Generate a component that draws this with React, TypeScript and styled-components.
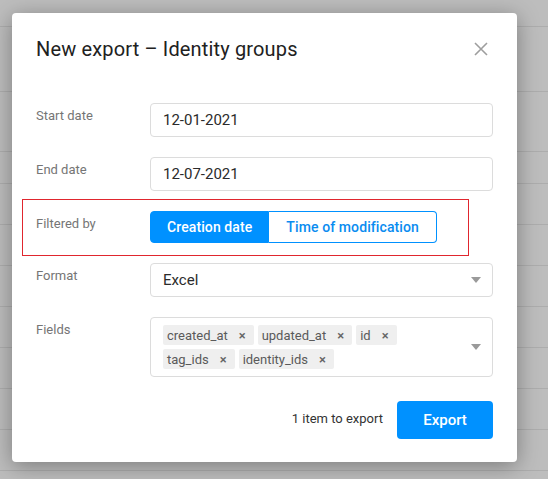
import React from 'react';
import styled, { createGlobalStyle } from 'styled-components';

const GlobalStyle = createGlobalStyle`
  html, body {
    margin: 0;
    padding: 0;
    background: #bdbdbd;
    font-family: Roboto, "Liberation Sans", Arial, sans-serif;
  }
  * { box-sizing: border-box; }
`;

const Page = styled.div`
  position: relative;
  width: 548px;
  height: 479px;
  overflow: hidden;
  background: #bdbdbd;
`;

const BackRow = styled.div<{ h: number }>`
  height: ${p => p.h}px;
  border-bottom: 1px solid #adadad;
`;

const Modal = styled.div`
  position: absolute;
  top: 13px;
  left: 12px;
  width: 505px;
  height: 449px;
  background: #fff;
  border-radius: 4px;
  box-shadow: 0 4px 22px rgba(0, 0, 0, 0.35);
  padding: 24px;
  display: flex;
  flex-direction: column;
`;

const Header = styled.div`
  display: flex;
  align-items: center;
  justify-content: space-between;
  height: 24px;
`;

const Title = styled.h1`
  margin: 0;
  font-size: 20px;
  font-weight: 400;
  line-height: 24px;
  letter-spacing: 0.15px;
  color: #212121;
`;

const CloseButton = styled.button`
  border: none;
  background: none;
  padding: 0;
  margin-right: 5px;
  width: 14px;
  height: 14px;
  display: flex;
  cursor: pointer;
`;

const Form = styled.div`
  margin-top: 42px;
  display: flex;
  flex-direction: column;
  gap: 20px;
`;

const Row = styled.div<{ highlight?: boolean }>`
  position: relative;
  display: flex;
  align-items: flex-start;

  ${p => p.highlight && `
    &::after {
      content: '';
      position: absolute;
      top: -12px;
      bottom: -13px;
      left: -14px;
      right: 24px;
      border: 1px solid #e0262e;
      pointer-events: none;
    }
  `}
`;

const Label = styled.div`
  width: 114px;
  flex-shrink: 0;
  padding-top: 3px;
  font-size: 13px;
  line-height: 20px;
  color: #757575;
`;

const Field = styled.div`
  flex: 1;
  height: 34px;
  border: 1px solid #dcdcdc;
  border-radius: 4px;
  display: flex;
  align-items: center;
  justify-content: space-between;
  padding: 0 11px 0 12px;
  font-size: 15px;
  color: #2b2b2b;
`;

const Arrow = styled.span`
  flex-shrink: 0;
  width: 0;
  height: 0;
  border-left: 5px solid transparent;
  border-right: 5px solid transparent;
  border-top: 6px solid #9a9a9a;
`;

const Toggle = styled.div`
  display: flex;
  height: 32px;
`;

const ToggleButton = styled.button<{ active?: boolean }>`
  height: 32px;
  padding: 0 16px;
  font-family: inherit;
  font-size: 14px;
  font-weight: 500;
  letter-spacing: 0.1px;
  border: 1px solid #0091ff;
  background: ${p => (p.active ? '#0091ff' : '#fff')};
  color: ${p => (p.active ? '#fff' : '#0a8cf0')};
  cursor: pointer;

  &:first-child {
    border-radius: 4px 0 0 4px;
  }
  &:last-child {
    border-left: none;
    padding: 0 17px;
    border-radius: 0 4px 4px 0;
  }
`;

const MultiSelect = styled.div`
  flex: 1;
  min-height: 59px;
  border: 1px solid #dcdcdc;
  border-radius: 4px;
  display: flex;
  align-items: center;
  padding: 7px 11px 7px 12px;
`;

const Chips = styled.div`
  flex: 1;
  display: flex;
  flex-wrap: wrap;
  gap: 4px;
  padding-right: 40px;
`;

const Chip = styled.span`
  display: inline-flex;
  align-items: center;
  height: 20px;
  padding: 0 8px 0 4px;
  background: #efefef;
  border-radius: 2px;
  font-size: 13px;
  color: #5a5a5a;
  gap: 11px;
`;

const ChipClose = styled.span`
  font-size: 13px;
  font-weight: 500;
  color: #666;
  line-height: 1;
`;

const Footer = styled.div`
  margin-top: 24px;
  display: flex;
  justify-content: flex-end;
  align-items: center;
  gap: 14px;
`;

const Count = styled.span`
  font-size: 13px;
  color: #333;
  margin-top: -4px;
`;

const ExportButton = styled.button`
  width: 96px;
  height: 38px;
  border: none;
  border-radius: 4px;
  background: #0091ff;
  color: #fff;
  font-family: inherit;
  font-size: 15px;
  font-weight: 500;
  cursor: pointer;
`;

const backRows = [27, 65, 60, 32, 41, 41, 41, 41, 41, 41, 41];
const fields = ['created_at', 'updated_at', 'id', 'tag_ids', 'identity_ids'];

export default function App() {
  return (
    <>
      <GlobalStyle />
      <Page>
        {backRows.map((h, i) => (
          <BackRow key={i} h={h} />
        ))}
        <Modal>
          <Header>
            <Title>New export – Identity groups</Title>
            <CloseButton aria-label="Close">
              <svg width="14" height="14" viewBox="0 0 14 14">
                <path d="M1 1 L13 13 M13 1 L1 13" stroke="#9e9e9e" strokeWidth="1.6" />
              </svg>
            </CloseButton>
          </Header>
          <Form>
            <Row>
              <Label>Start date</Label>
              <Field>12-01-2021</Field>
            </Row>
            <Row>
              <Label>End date</Label>
              <Field>12-07-2021</Field>
            </Row>
            <Row highlight>
              <Label>Filtered by</Label>
              <Toggle>
                <ToggleButton active>Creation date</ToggleButton>
                <ToggleButton>Time of modification</ToggleButton>
              </Toggle>
            </Row>
            <Row>
              <Label>Format</Label>
              <Field>
                Excel
                <Arrow />
              </Field>
            </Row>
            <Row>
              <Label>Fields</Label>
              <MultiSelect>
                <Chips>
                  {fields.map(f => (
                    <Chip key={f}>
                      {f}
                      <ChipClose>×</ChipClose>
                    </Chip>
                  ))}
                </Chips>
                <Arrow />
              </MultiSelect>
            </Row>
          </Form>
          <Footer>
            <Count>1 item to export</Count>
            <ExportButton>Export</ExportButton>
          </Footer>
        </Modal>
      </Page>
    </>
  );
}
